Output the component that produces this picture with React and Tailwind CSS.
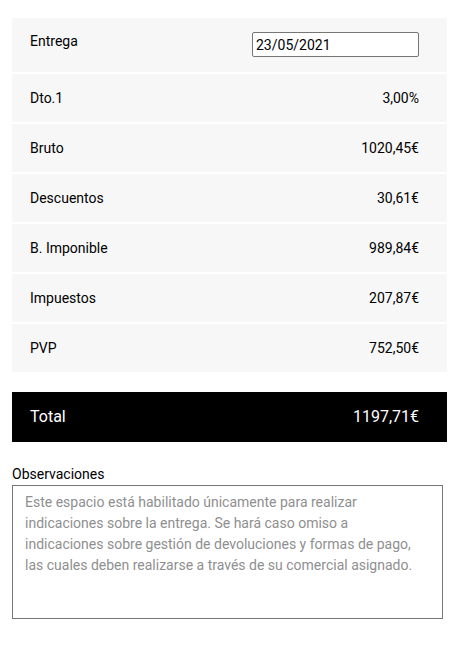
export default function App() {
  const rows = [
    ['Dto.1', '3,00%'],
    ['Bruto', '1020,45€'],
    ['Descuentos', '30,61€'],
    ['B. Imponible', '989,84€'],
    ['Impuestos', '207,87€'],
    ['PVP', '752,50€'],
  ]

  return (
    <div className="bg-white min-h-[662px] pl-3 pr-4 pt-[18px] text-black text-sm" style={{ fontFamily: 'Roboto, "Liberation Sans", sans-serif' }}>
      <div className="flex flex-col gap-[2px]">
        <div className="flex justify-between items-start h-[54px] bg-[#f7f7f7] pl-[18px] pr-[28px] pt-[14px]">
          <span className="leading-[16px] pt-[1px]">Entrega</span>
          <input
            type="text"
            defaultValue="23/05/2021"
            className="w-[167px] h-[25px] border border-[#767676] bg-white px-[3px] text-sm text-black rounded-[2px] outline-none"
          />
        </div>
        {rows.map(([label, value]) => (
          <div key={label} className="flex justify-between items-center h-[48px] bg-[#f7f7f7] pl-[18px] pr-[28px]">
            <span>{label}</span>
            <span>{value}</span>
          </div>
        ))}
      </div>

      <div className="flex justify-between items-center h-[50px] bg-black text-white text-base pl-[18px] pr-[28px] mt-5">
        <span>Total</span>
        <span>1197,71€</span>
      </div>

      <div className="mt-[22px] leading-[20px]">Observaciones</div>
      <textarea
        placeholder="Este espacio está habilitado únicamente para realizar indicaciones sobre la entrega. Se hará caso omiso a indicaciones sobre gestión de devoluciones y formas de pago, las cuales deben realizarse a través de su comercial asignado."
        className="block w-[431px] h-[134px] mt-[1px] border border-[#767676] px-3 py-[6px] text-sm leading-[21px] resize-none outline-none placeholder:text-[#8f8f8f]"
      />
    </div>
  )
}
